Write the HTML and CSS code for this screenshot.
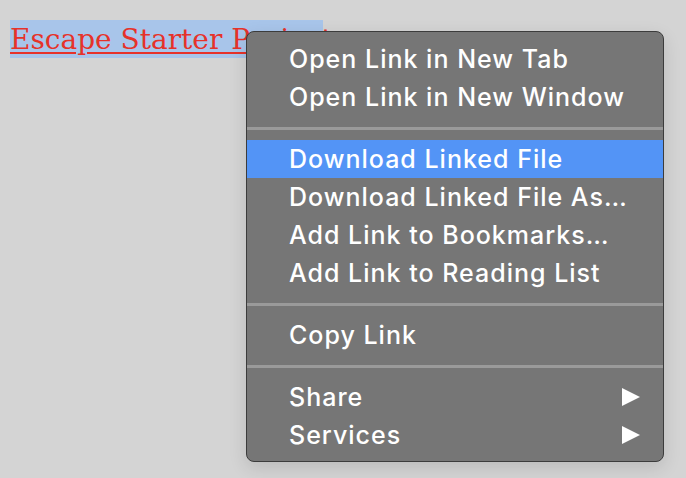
FILE: index.html
```html
<!DOCTYPE html>
<html>
<head>
<meta charset="utf-8">
<link rel="stylesheet" href="styles.css">
</head>
<body>
<div class="page">
  <a class="link" href="#">Escape Starter Project</a>
</div>
<div class="menu">
  <div class="item">Open Link in New Tab</div>
  <div class="item">Open Link in New Window</div>
  <div class="sep"></div>
  <div class="item active">Download Linked File</div>
  <div class="item">Download Linked File As…</div>
  <div class="item">Add Link to Bookmarks…</div>
  <div class="item">Add Link to Reading List</div>
  <div class="sep"></div>
  <div class="item">Copy Link</div>
  <div class="sep"></div>
  <div class="item sub">Share<span class="arrow"></span></div>
  <div class="item sub">Services<span class="arrow"></span></div>
</div>
</body>
</html>
```
FILE: styles.css
```css
html, body {
  margin: 0;
  padding: 0;
  background: #d4d4d4;
  width: 686px;
  height: 478px;
  overflow: hidden;
}
.page {
  padding: 20px 0 0 10px;
}
.link {
  display: inline-block;
  height: 38px;
  line-height: 40px;
  background: #a8c5ea;
  color: #e6322a;
  font-family: "DejaVu Serif", Georgia, serif;
  font-size: 28px;
  text-decoration: underline;
  text-decoration-thickness: 2px;
  text-underline-offset: 3px;
  white-space: nowrap;
  width: 313px;
}
.menu {
  position: absolute;
  left: 246px;
  top: 31px;
  width: 418px;
  height: 431px;
  box-sizing: border-box;
  background: #767676;
  border: 1px solid #3c3c3c;
  border-radius: 8px;
  padding-top: 8px;
  box-shadow: 0 6px 18px rgba(0,0,0,0.12);
  font-family: Inter, "Liberation Sans", Arial, sans-serif;
  font-size: 25px;
  font-weight: 500;
  letter-spacing: 1px;
  color: #ffffff;
}
.item {
  height: 38px;
  line-height: 38px;
  padding-left: 42px;
  padding-right: 23px;
  display: flex;
  align-items: center;
  justify-content: space-between;
  white-space: nowrap;
}
.item.active {
  background: #5394f6;
}
.sep {
  height: 3px;
  background: #9a9a9a;
  margin: 11px 0 10px;
}
.arrow {
  width: 0;
  height: 0;
  border-top: 9.5px solid transparent;
  border-bottom: 9.5px solid transparent;
  border-left: 18px solid #ffffff;
}
```
